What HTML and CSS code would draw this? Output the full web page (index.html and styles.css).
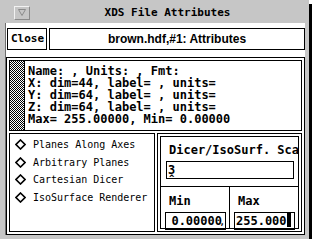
FILE: index.html
```html
<!DOCTYPE html>
<html lang="en">
<head>
    <meta charset="UTF-8">
    <title>XDS File Attributes</title>
    <link rel="stylesheet" href="styles.css">
</head>
<body>
    <div class="window">
        <div class="titlebar">
            <div class="menu-btn">
                <svg width="8" height="7" viewBox="0 0 8 7"><polygon points="0.5,0.5 7.5,0.5 4,6.5" fill="none" stroke="#8a8a8a" stroke-width="1"/></svg>
            </div>
            <div class="title">XDS File Attributes</div>
        </div>
        <div class="client">
            <div class="top-row">
                <div class="close-btn">Close</div>
                <div class="file-field">brown.hdf,#1: Attributes</div>
            </div>
            <div class="main">
                <div class="info">
                    <div class="stipple"></div>
                    <div class="info-text">
                        <div>Name: , Units: , Fmt:</div>
                        <div>X: dim=44, label= , units=</div>
                        <div>Y: dim=64, label= , units=</div>
                        <div>Z: dim=64, label= , units=</div>
                        <div>Max= 255.00000, Min= 0.00000</div>
                    </div>
                </div>
                <div class="lower">
                    <div class="modes">
                        <div class="mode"><svg class="diamond" width="11" height="11" viewBox="0 0 11 11"><polygon points="5.5,1 10,5.5 5.5,10 1,5.5" fill="none" stroke="#000" stroke-width="1.6"/></svg>Planes Along Axes</div>
                        <div class="mode"><svg class="diamond" width="11" height="11" viewBox="0 0 11 11"><polygon points="5.5,1 10,5.5 5.5,10 1,5.5" fill="none" stroke="#000" stroke-width="1.6"/></svg>Arbitrary Planes</div>
                        <div class="mode"><svg class="diamond" width="11" height="11" viewBox="0 0 11 11"><polygon points="5.5,1 10,5.5 5.5,10 1,5.5" fill="none" stroke="#000" stroke-width="1.6"/></svg>Cartesian Dicer</div>
                        <div class="mode"><svg class="diamond" width="11" height="11" viewBox="0 0 11 11"><polygon points="5.5,1 10,5.5 5.5,10 1,5.5" fill="none" stroke="#000" stroke-width="1.6"/></svg>IsoSurface Renderer</div>
                    </div>
                    <div class="params">
                        <div class="params-grid">
                            <div class="scale-box">
                                <div class="field-label">Dicer/IsoSurf. Scale</div>
                                <div class="text-input">3<span class="caret">^</span></div>
                            </div>
                            <div class="range">
                                <div class="range-cell min-cell">
                                    <div class="field-label">Min</div>
                                    <div class="text-input num">0.00000<span class="caret-end">,</span></div>
                                </div>
                                <div class="range-cell">
                                    <div class="field-label">Max</div>
                                    <div class="text-input num max-input">255.000<span class="block-cursor"></span></div>
                                </div>
                            </div>
                        </div>
                    </div>
                </div>
            </div>
        </div>
    </div>
</body>
</html>
```

FILE: styles.css
```css
body {
    margin: 0;
    background-color: #ffffff;
    font-family: "DejaVu Sans Mono", monospace;
}

.window {
    width: 309px;
    height: 239px;
    box-sizing: border-box;
    background-color: #c6c6c6;
    padding: 0 4px 4px 5px;
    display: flex;
    flex-direction: column;
    box-shadow: 3px 4px 0 #000;
}

.titlebar {
    height: 23px;
    flex-shrink: 0;
    display: flex;
    align-items: center;
}

.menu-btn {
    width: 14px;
    height: 12px;
    margin-left: 9px;
    margin-top: 2px;
    border-top: 1px solid #f2f2f2;
    border-left: 1px solid #f2f2f2;
    border-right: 1px solid #8a8a8a;
    border-bottom: 1px solid #8a8a8a;
    display: flex;
    align-items: center;
    justify-content: center;
}

.title {
    flex: 1;
    text-align: center;
    font-size: 11px;
    font-weight: bold;
    margin-top: 2px;
}

.client {
    flex: 1;
    min-height: 0;
    background-color: #ffffff;
    border-left: 1px solid #6e6e6e;
    padding-top: 5px;
    display: flex;
    flex-direction: column;
}

.top-row {
    display: flex;
    gap: 2px;
    height: 22px;
    flex-shrink: 0;
    padding-left: 1px;
}

.close-btn {
    width: 40px;
    box-sizing: border-box;
    border: 1px solid #000;
    font-size: 11px;
    font-weight: bold;
    line-height: 20px;
    padding-left: 3px;
}

.file-field {
    flex: 1;
    border: 1px solid #000;
    font-family: "Liberation Sans", Arial, sans-serif;
    font-size: 12px;
    font-weight: bold;
    line-height: 20px;
    text-align: center;
}

.main {
    flex: 1;
    min-height: 0;
    margin-top: 7px;
    border: 1px solid #000;
    padding: 2px;
    display: flex;
    flex-direction: column;
    gap: 2px;
}

.info {
    height: 71px;
    flex-shrink: 0;
    box-sizing: border-box;
    border: 1px solid #000;
    display: flex;
}

.stipple {
    width: 14px;
    border-right: 1px solid #000;
    background: repeating-conic-gradient(#000 0 25%, #fff 0 50%) 0 0 / 2px 2px;
}

.info-text {
    padding: 4px 0 0 3px;
    font-size: 12px;
    font-weight: bold;
    line-height: 12px;
    white-space: nowrap;
}

.lower {
    flex: 1;
    min-height: 0;
    display: flex;
    gap: 2px;
}

.modes {
    width: 146px;
    flex-shrink: 0;
    box-sizing: border-box;
    border: 1px solid #000;
    padding: 2px 0 0 5px;
}

.mode {
    height: 17.5px;
    display: flex;
    align-items: center;
    gap: 7px;
    font-size: 10px;
    white-space: nowrap;
}

.diamond {
    flex-shrink: 0;
}

.params {
    flex: 1;
    min-width: 0;
    border: 1px solid #000;
    padding: 2px;
    display: flex;
}

.params-grid {
    flex: 1;
    min-width: 0;
    border: 1px solid #000;
    display: flex;
    flex-direction: column;
}

.scale-box {
    height: 49px;
    flex-shrink: 0;
    border-bottom: 1px solid #000;
    overflow: hidden;
}

.field-label {
    font-size: 12px;
    font-weight: bold;
    line-height: 14px;
    padding: 6px 0 4px 8px;
    white-space: nowrap;
    overflow: hidden;
}

.text-input {
    height: 18px;
    box-sizing: border-box;
    margin: 0 4px 0 5px;
    border: 1px solid #000;
    font-size: 12px;
    font-weight: bold;
    line-height: 16px;
    padding-left: 1px;
    position: relative;
}

.caret {
    position: absolute;
    left: 2px;
    top: 8px;
    font-size: 9px;
}

.range {
    flex: 1;
    min-height: 0;
    display: flex;
}

.range-cell {
    flex: 1;
    min-width: 0;
}

.min-cell {
    border-right: 1px solid #000;
}

.range-cell .field-label {
    padding: 7px 0 4px 8px;
}

.num {
    margin: 0 3px 0 4px;
    text-align: right;
    padding-right: 3px;
    white-space: nowrap;
    overflow: hidden;
}

.caret-end {
    position: absolute;
    right: 0;
    top: 1px;
    font-size: 9px;
}

.max-input {
    text-align: left;
    padding-right: 0;
}

.block-cursor {
    display: inline-block;
    width: 4px;
    height: 14px;
    background-color: #000;
    vertical-align: -2px;
}
```
